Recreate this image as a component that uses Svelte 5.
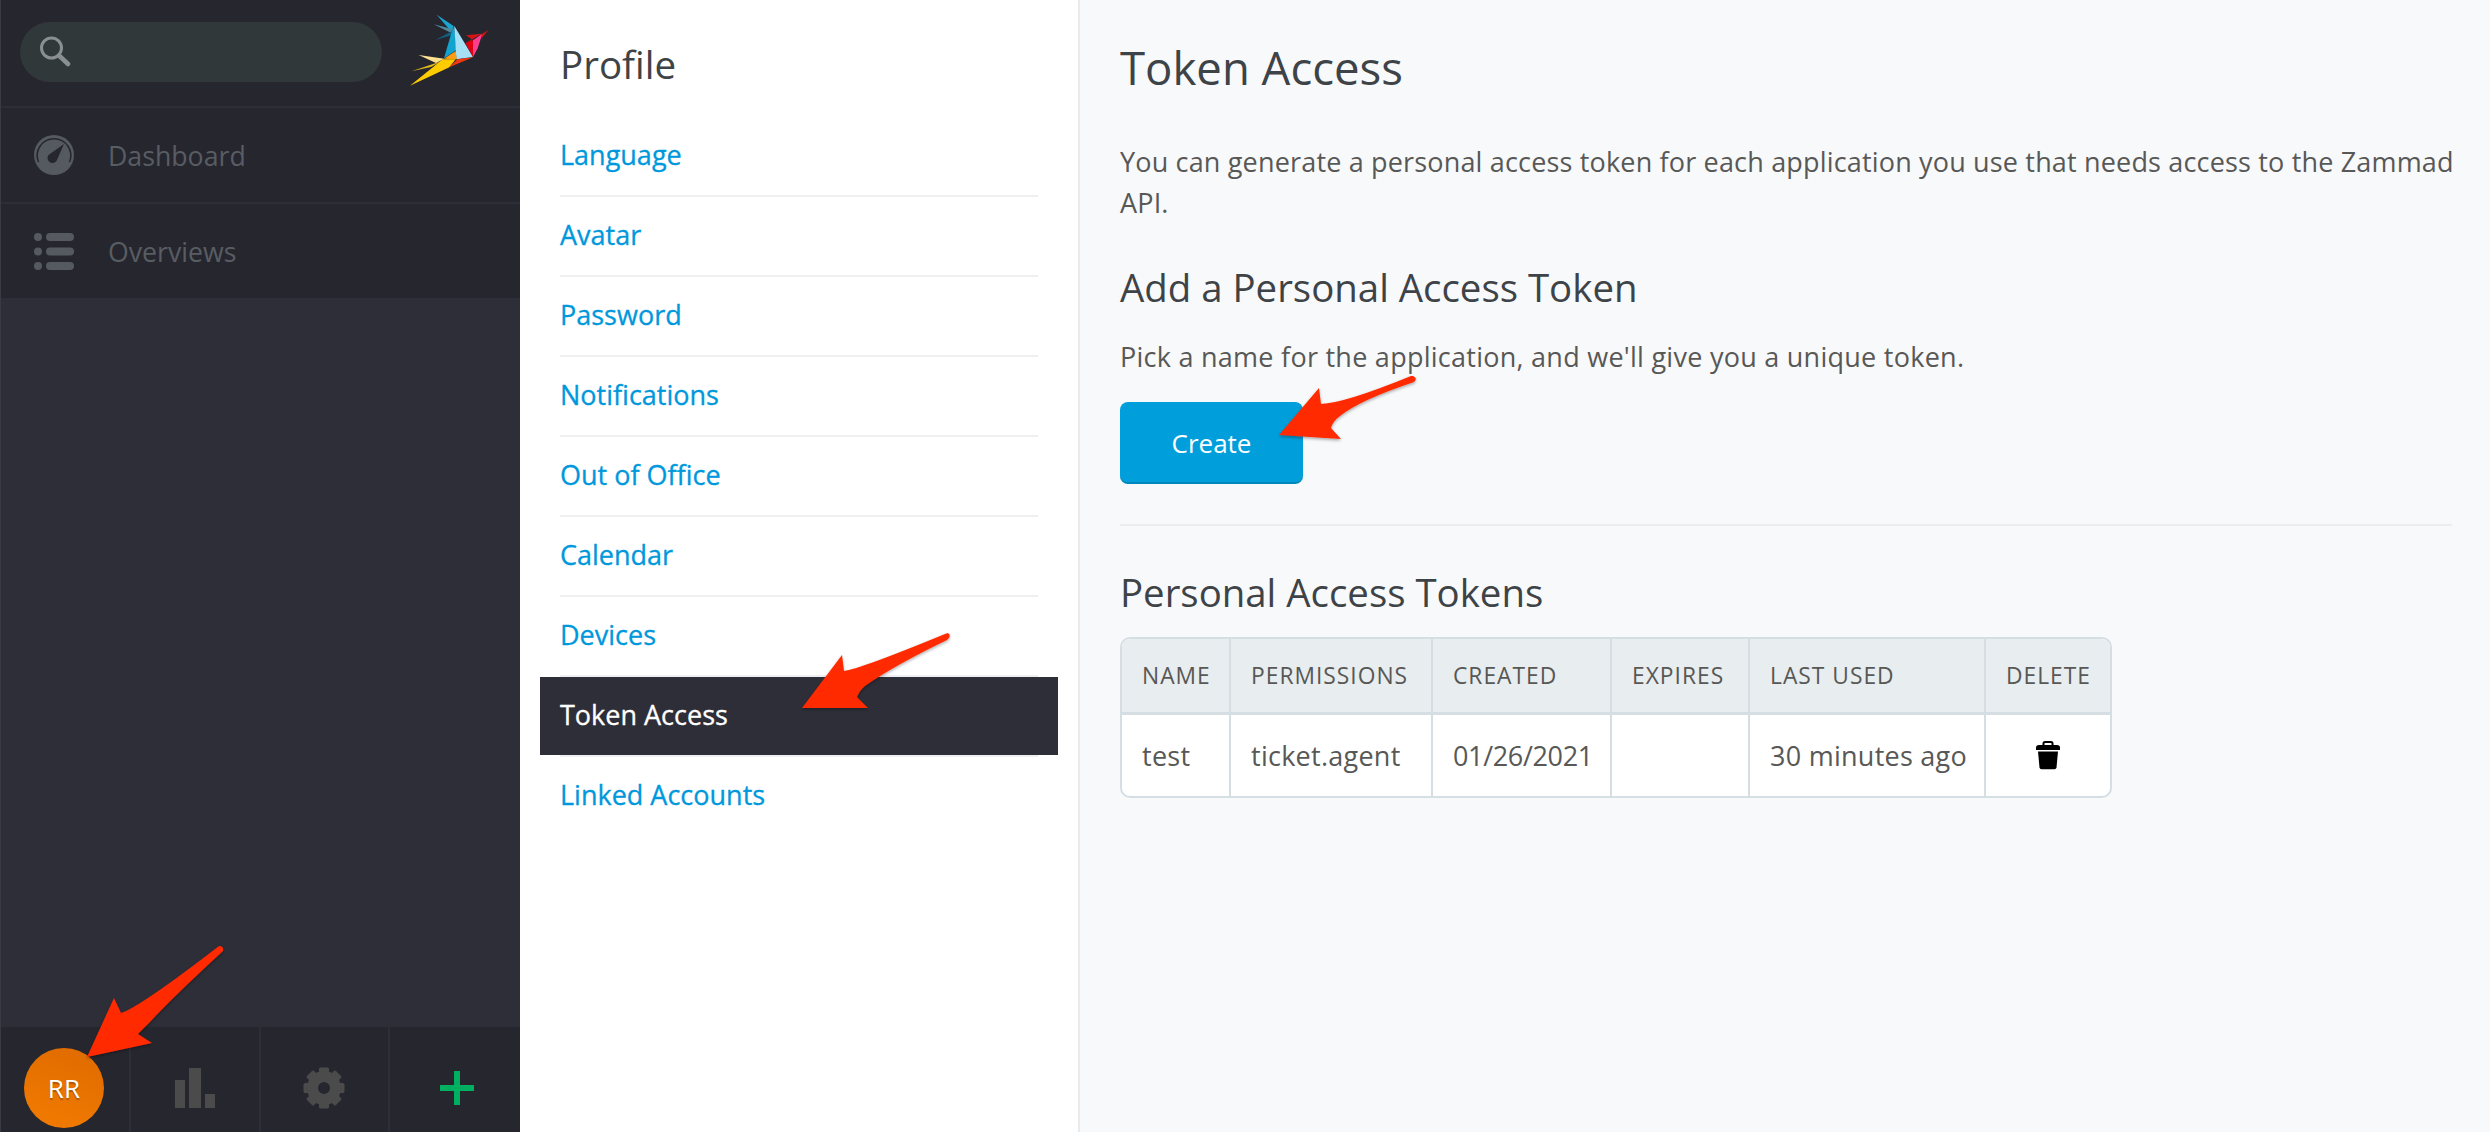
<script>
	const navItems = ['Language', 'Avatar', 'Password', 'Notifications', 'Out of Office', 'Calendar', 'Devices', 'Token Access', 'Linked Accounts']
	const gearTeeth = [0, 45, 90, 135, 180, 225, 270, 315]
</script>

<div class="page">
	<aside class="sidebar">
		<div class="side-head">
			<div class="search">
				<svg width="32" height="32" viewBox="0 0 32 32">
					<circle cx="12.500" cy="12" r="10" fill="none" stroke="#8a8f90" stroke-width="3" />
					<path d="M20 19.500l9 8.500" stroke="#8a8f90" stroke-width="4.500" stroke-linecap="round" />
				</svg>
			</div>
			<svg class="logo" width="120" height="100" viewBox="0 0 360 300">
				<polygon points="167,44 218,78 212,96" fill="#1aa5d0" />
				<polygon points="158,73 216,88 212,100" fill="#4d8a9e" />
				<polygon points="163,120 212,94 217,104" fill="#125f80" />
				<polygon points="212,96 220,78 226,150 189,175" fill="#14a3cf" />
				<polygon points="220,78 276,171 226,178" fill="#a5e0f5" />
				<polygon points="189,176 224,153 227,178" fill="#ff9d12" />
				<polygon points="113,165 190,176 165,189" fill="#ffe28f" />
				<polygon points="91,214 165,189 180,184 150,201" fill="#dfb81a" />
				<polygon points="87,257 185,178 224,178 205,202" fill="#ffcc00" />
				<polygon points="205,202 229,178 276,172" fill="#f0380f" />
				<polygon points="253,129 276,120 255,106 303,101" fill="#d61414" />
				<polygon points="276,171 253,129 276,121" fill="#e00012" />
				<polygon points="276,121 304,101 290,145 276,171" fill="#ff3f8c" />
				<polygon points="304,101 322,90 300,118" fill="#d61414" />
			</svg>
		</div>
		<div class="side-row">
			<svg width="40" height="40" viewBox="0 0 40 40">
				<circle cx="20" cy="20" r="20" fill="#545a60" />
				<path d="M4.500 27a16.800 16.800 0 1 1 31 0" fill="none" stroke="#26262f" stroke-width="1.500" />
				<path d="M30 9L22.500 26a5 5 0 0 1-8-6z" fill="#26262f" />
			</svg>
			<span>Dashboard</span>
		</div>
		<div class="side-row">
			<svg width="40" height="37" viewBox="0 0 40 37">
				<circle cx="4" cy="4" r="4" fill="#545a60" />
				<circle cx="4" cy="18.500" r="4" fill="#545a60" />
				<circle cx="4" cy="33" r="4" fill="#545a60" />
				<rect x="12" y="0" width="28" height="8" rx="4" fill="#545a60" />
				<rect x="12" y="14.500" width="28" height="8" rx="4" fill="#545a60" />
				<rect x="12" y="29" width="28" height="8" rx="4" fill="#545a60" />
			</svg>
			<span>Overviews</span>
		</div>
		<div class="side-fill"></div>
		<div class="side-foot">
			<div class="foot-cell first"><div class="avatar">RR</div></div>
			<div class="foot-cell">
				<svg width="40" height="40" viewBox="0 0 40 40">
					<rect x="0" y="12" width="10" height="28" fill="#4b4b4b" />
					<rect x="14" y="0" width="12" height="40" fill="#4b4b4b" />
					<rect x="30" y="26" width="10" height="14" fill="#4b4b4b" />
				</svg>
			</div>
			<div class="foot-cell">
				<svg width="42" height="42" viewBox="0 0 42 42">
					{#each gearTeeth as deg}
						<rect x="16" y="0.500" width="10" height="10" rx="1.500" fill="#4b4b4b" transform="rotate({deg} 21 21)" />
					{/each}
					<circle cx="21" cy="21" r="11.500" fill="none" stroke="#4b4b4b" stroke-width="11" />
				</svg>
			</div>
			<div class="foot-cell">
				<svg width="34" height="34" viewBox="0 0 34 34">
					<path d="M17 0v34M0 17h34" stroke="#00b060" stroke-width="6" />
				</svg>
			</div>
		</div>
	</aside>

	<nav class="subnav">
		<h2>Profile</h2>
		<ul>
			{#each navItems as item}
				<li class:active={item === 'Token Access'}><a href="#top">{item}</a></li>
			{/each}
		</ul>
	</nav>

	<main class="content">
		<h1>Token Access</h1>
		<p class="intro">You can generate a personal access token for each application you use that needs access to the Zammad API.</p>
		<h3 class="add-title">Add a Personal Access Token</h3>
		<p class="pick">Pick a name for the application, and we'll give you a unique token.</p>
		<button>Create</button>
		<hr />
		<h3 class="list-title">Personal Access Tokens</h3>
		<table>
			<thead>
				<tr>
					<th class="c1">Name</th>
					<th class="c2">Permissions</th>
					<th class="c3">Created</th>
					<th class="c4">Expires</th>
					<th class="c5">Last Used</th>
					<th class="c6">Delete</th>
				</tr>
			</thead>
			<tbody>
				<tr>
					<td>test</td>
					<td>ticket.agent</td>
					<td class="date">01/26/2021</td>
					<td></td>
					<td>30 minutes ago</td>
					<td class="trash">
						<svg width="24" height="29" viewBox="0 0 24 29">
							<path d="M7.500 4V2.500Q7.500 1 9 1h6q1.500 0 1.500 1.500V4" fill="none" stroke="#000" stroke-width="2" />
							<path d="M0 9V6.500Q0 4 3 4h18q3 0 3 2.500V9z" fill="#000" />
							<path d="M2 10.500h20l-1.500 16q-.2 1.800-2 1.800h-13q-1.800 0-2-1.800z" fill="#000" />
						</svg>
					</td>
				</tr>
			</tbody>
		</table>
	</main>

	<svg class="arrows" width="2490" height="1132" viewBox="0 0 2490 1132">
		<defs>
			<filter id="arrowShadow" x="-10%" y="-10%" width="120%" height="130%">
				<feDropShadow dx="0" dy="1.500" stdDeviation="1.500" flood-color="#000" flood-opacity="0.35" />
			</filter>
		</defs>
		<g fill="#ff2a00" filter="url(#arrowShadow)">
			<path d="M948 633Q952 636 947 640Q895 665 865 686Q860 690 857 697L868 708L802 708L842 655L844 671Q860 669 945 634z" />
			<path d="M1413 376Q1418 378 1414 382Q1360 400 1340 416Q1333 421 1331 428L1341 439L1279 435L1319 388L1321 404Q1345 403 1411 376z" />
			<path d="M219 946Q224 946 223 951Q170 1000 150 1022Q142 1030 138 1034L152 1043L87 1057L114 998L121 1013Q140 1007 219 946z" />
		</g>
	</svg>
</div>

<style>
	:global(body) {
		margin: 0;
		background: #f8f9fb;
	}
	.page {
		position: relative;
		display: flex;
		width: 2490px;
		height: 1132px;
		overflow: hidden;
		font-family: "Open Sans", "Noto Sans", sans-serif;
		font-size: 27px;
		color: #585856;
	}
	.sidebar {
		display: flex;
		flex-direction: column;
		width: 520px;
		flex: none;
		background: #2e2e38;
		border-left: 1px solid #3a3a44;
		box-sizing: border-box;
	}
	.side-head {
		display: flex;
		align-items: flex-start;
		height: 106px;
		background: #26262f;
		border-bottom: 2px solid #2e2e38;
	}
	.search {
		display: flex;
		align-items: center;
		width: 362px;
		height: 60px;
		margin: 22px 0 0 19px;
		padding-left: 19px;
		box-sizing: border-box;
		background: #313839;
		border-radius: 30px;
	}
	.logo {
		margin-left: -1px;
	}
	.side-row {
		display: flex;
		align-items: center;
		gap: 34px;
		height: 94px;
		padding-left: 33px;
		background: #26262f;
		border-bottom: 2px solid #2e2e38;
		color: #585d63;
		font-size: 26.700px;
	}
	.side-row:last-of-type {
		border-bottom: none;
	}
	.side-fill {
		flex: 1;
	}
	.side-foot {
		display: flex;
		height: 105px;
		background: #26262f;
	}
	.foot-cell {
		display: flex;
		align-items: center;
		justify-content: center;
		width: 130px;
		padding-top: 17px;
		border-right: 2px solid #2e2e38;
		box-sizing: border-box;
	}
	.foot-cell.first {
		padding-right: 2px;
	}
	.foot-cell:last-child {
		border-right: none;
		padding-left: 4px;
	}
	.avatar {
		display: flex;
		align-items: center;
		justify-content: center;
		width: 80px;
		height: 80px;
		border-radius: 50%;
		background: linear-gradient(20deg, #f27c00, #df6a00);
		color: #fff;
		font-size: 26px;
		font-weight: 500;
		text-shadow: 0 2px 1px rgba(0, 0, 0, 0.25);
	}
	.subnav {
		width: 560px;
		flex: none;
		box-sizing: border-box;
		padding: 0 40px;
		background: #fff;
		border-right: 2px solid #e8eaec;
	}
	.subnav h2 {
		margin: 0;
		padding-top: 38px;
		height: 79px;
		line-height: 52px;
		font-size: 38.500px;
		font-weight: 400;
		color: #3e4347;
	}
	.subnav ul {
		list-style: none;
		margin: 0;
		padding: 0;
	}
	.subnav li {
		height: 80px;
		box-sizing: border-box;
		border-bottom: 2px solid #eeeff0;
	}
	.subnav li:last-child {
		border-bottom: none;
	}
	.subnav a {
		display: block;
		height: 78px;
		line-height: 76px;
		color: #0098dc;
		text-decoration: none;
		font-weight: 500;
		-webkit-text-stroke: 0.300px currentColor;
	}
	.subnav li.active a {
		margin: 0 -20px;
		padding: 0 20px;
		background: #2e2e38;
		color: #fff;
	}
	.content {
		flex: 1;
		padding: 0 38px 0 40px;
	}
	h1 {
		margin: 0;
		padding-top: 40px;
		height: 122px;
		line-height: 54px;
		font-size: 45.500px;
		font-weight: 400;
		color: #3e4347;
	}
	p {
		letter-spacing: 0.260px;
	}
	.intro {
		margin: -21px -14px 0 0;
		line-height: 41px;
		letter-spacing: 0.170px;
	}
	h3 {
		margin: 0;
		font-size: 38.400px;
		font-weight: 400;
		color: #3e4347;
		line-height: 50px;
	}
	.add-title {
		margin-top: 39px;
	}
	.pick {
		margin: 25px 0 0;
		line-height: 40px;
	}
	button {
		display: block;
		width: 183px;
		height: 82px;
		margin-top: 25px;
		padding: 2px 0 0;
		border: none;
		border-bottom: 2px solid #0088bd;
		border-radius: 8px;
		background: #009fdb;
		color: #fff;
		font: inherit;
		font-size: 26px;
		font-weight: 500;
	}
	hr {
		height: 2px;
		margin: 40px 0 0;
		border: none;
		background: #ebedef;
	}
	.list-title {
		margin-top: 41px;
	}
	table {
		width: 992px;
		margin-top: 20px;
		table-layout: fixed;
		border-collapse: separate;
		border-spacing: 0;
		border: 2px solid #d5dfe3;
		border-radius: 10px;
		background: #fff;
		overflow: hidden;
		box-sizing: border-box;
	}
	th {
		height: 76px;
		padding: 0 0 0 20px;
		box-sizing: border-box;
		background: #e8edef;
		border-right: 2px solid #d5dfe3;
		border-bottom: 3px solid #d5dfe3;
		font-size: 22.800px;
		font-weight: 400;
		letter-spacing: 1px;
		text-align: left;
		text-transform: uppercase;
		color: #585856;
	}
	td {
		height: 81px;
		padding: 0 0 0 20px;
		border-right: 2px solid #d5dfe3;
		white-space: nowrap;
		letter-spacing: 0.260px;
	}
	td.date {
		letter-spacing: -0.350px;
	}
	th:last-child, td:last-child {
		border-right: none;
	}
	.c1 { width: 109px; }
	.c2 { width: 202px; }
	.c3 { width: 179px; }
	.c4 { width: 138px; }
	.c5 { width: 236px; }
	.trash {
		padding: 0;
		text-align: center;
	}
	.trash svg {
		display: block;
		margin: 0 auto;
	}
	.arrows {
		position: absolute;
		top: 0;
		left: 0;
		pointer-events: none;
	}
</style>
